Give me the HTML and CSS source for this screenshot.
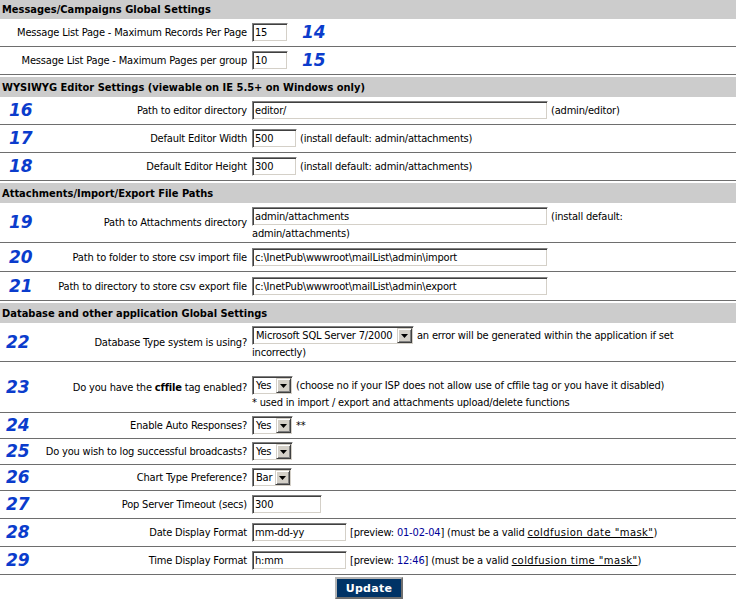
FILE: index.html
```html
<!DOCTYPE html>
<html>
<head>
<meta charset="utf-8">
<title>Global Settings</title>
<link rel="stylesheet" href="styles.css">
</head>
<body>
<form class="settings">

<table class="grid">
  <colgroup><col class="c-num"><col class="c-label"><col></colgroup>
  <tr class="head head--first"><td colspan="3">Messages/Campaigns Global Settings</td></tr>
  <tr class="r-in">
    <td colspan="2" class="label">Message List Page - Maximum Records Per Page</td>
    <td class="field"><input class="txt w36" value="15"><span class="num num--after">14</span></td>
  </tr>
  <tr class="r-in">
    <td colspan="2" class="label">Message List Page - Maximum Pages per group</td>
    <td class="field"><input class="txt w36" value="10"><span class="num num--after">15</span></td>
  </tr>
</table>

<table class="grid">
  <colgroup><col class="c-num"><col class="c-label"><col></colgroup>
  <tr class="head"><td colspan="3">WYSIWYG Editor Settings (viewable on IE 5.5+ on Windows only)</td></tr>
  <tr class="r-in">
    <td class="numcell"><span class="num">16</span></td>
    <td class="label">Path to editor directory</td>
    <td class="field"><input class="txt w296" value="editor/"> (admin/editor)</td>
  </tr>
  <tr class="r-in">
    <td class="numcell"><span class="num">17</span></td>
    <td class="label">Default Editor Width</td>
    <td class="field"><input class="txt w45" value="500"> (install default: admin/attachments)</td>
  </tr>
  <tr class="r-in">
    <td class="numcell"><span class="num">18</span></td>
    <td class="label">Default Editor Height</td>
    <td class="field"><input class="txt w45" value="300"> (install default: admin/attachments)</td>
  </tr>
</table>

<table class="grid grid--paths">
  <colgroup><col class="c-num"><col class="c-label"><col></colgroup>
  <tr class="head"><td colspan="3">Attachments/Import/Export File Paths</td></tr>
  <tr class="r-two">
    <td class="numcell"><span class="num">19</span></td>
    <td class="label">Path to Attachments directory</td>
    <td class="field field--wrap"><input class="txt w296" value="admin/attachments"> (install default:<br>admin/attachments)</td>
  </tr>
  <tr class="r-tall">
    <td class="numcell"><span class="num">20</span></td>
    <td class="label">Path to folder to store csv import file</td>
    <td class="field"><input class="txt w296" value="c:\InetPub\wwwroot\mailList\admin\import"></td>
  </tr>
  <tr class="r-tall">
    <td class="numcell"><span class="num">21</span></td>
    <td class="label">Path to directory to store csv export file</td>
    <td class="field"><input class="txt w296" value="c:\InetPub\wwwroot\mailList\admin\export"></td>
  </tr>
</table>

<table class="grid grid--app">
  <colgroup><col class="c-num"><col class="c-label"><col></colgroup>
  <tr class="head"><td colspan="3">Database and other application Global Settings</td></tr>
  <tr class="r-two r-two--short">
    <td class="numcell"><span class="num">22</span></td>
    <td class="label">Database Type system is using?</td>
    <td class="field field--wrap"><span class="select sel-db"><span class="select__value">Microsoft SQL Server 7/2000</span><span class="select__btn"><svg width="7" height="4" viewBox="0 0 7 4"><path d="M0 0h7L3.5 4z" fill="#000"/></svg></span></span> an error will be generated within the application if set<br>incorrectly)</td>
  </tr>
  <tr class="r-three">
    <td class="numcell"><span class="num">23</span></td>
    <td class="label">Do you have the <b>cffile</b> tag enabled?</td>
    <td class="field field--low"><span class="select sel-yn"><span class="select__value">Yes</span><span class="select__btn"><svg width="7" height="4" viewBox="0 0 7 4"><path d="M0 0h7L3.5 4z" fill="#000"/></svg></span></span> (choose no if your ISP does not allow use of cffile tag or you have it disabled)<br>* used in import / export and attachments upload/delete functions</td>
  </tr>
  <tr class="r-sel">
    <td class="numcell"><span class="num">24</span></td>
    <td class="label">Enable Auto Responses?</td>
    <td class="field"><span class="select sel-yn"><span class="select__value">Yes</span><span class="select__btn"><svg width="7" height="4" viewBox="0 0 7 4"><path d="M0 0h7L3.5 4z" fill="#000"/></svg></span></span> **</td>
  </tr>
  <tr class="r-sel">
    <td class="numcell"><span class="num">25</span></td>
    <td class="label">Do you wish to log successful broadcasts?</td>
    <td class="field"><span class="select sel-yn"><span class="select__value">Yes</span><span class="select__btn"><svg width="7" height="4" viewBox="0 0 7 4"><path d="M0 0h7L3.5 4z" fill="#000"/></svg></span></span></td>
  </tr>
  <tr class="r-sel">
    <td class="numcell"><span class="num">26</span></td>
    <td class="label">Chart Type Preference?</td>
    <td class="field"><span class="select sel-bar"><span class="select__value">Bar</span><span class="select__btn"><svg width="7" height="4" viewBox="0 0 7 4"><path d="M0 0h7L3.5 4z" fill="#000"/></svg></span></span></td>
  </tr>
  <tr class="r-in">
    <td class="numcell"><span class="num">27</span></td>
    <td class="label">Pop Server Timeout (secs)</td>
    <td class="field"><input class="txt w70" value="300"></td>
  </tr>
  <tr class="r-in">
    <td class="numcell"><span class="num">28</span></td>
    <td class="label">Date Display Format</td>
    <td class="field"><input class="txt w95" value="mm-dd-yy"> [preview: <span class="preview">01-02-04</span>] (must be a valid <a class="mask" href="#">coldfusion date "mask"</a>)</td>
  </tr>
  <tr class="r-in">
    <td class="numcell"><span class="num">29</span></td>
    <td class="label">Time Display Format</td>
    <td class="field"><input class="txt w95" value="h:mm"> [preview: <span class="preview">12:46</span>] (must be a valid <a class="mask" href="#">coldfusion time "mask"</a>)</td>
  </tr>
</table>

<div class="actions"><button type="button" class="btn">Update</button></div>
</form>
</body>
</html>
```

FILE: styles.css
```css
html, body {
  margin: 0;
  padding: 0;
  background: #fff;
}

body {
  font: 11px/15px "DejaVu Sans Condensed", "DejaVu Sans", sans-serif;
  letter-spacing: -0.18px;
  color: #000;
}

.grid {
  width: 736px;
  border-collapse: separate;
  border-spacing: 0;
  table-layout: fixed;
}

.c-num { width: 60px; }
.c-label { width: 190px; }

.grid--paths .c-num { width: 48px; }
.grid--paths .c-label { width: 202px; }

.grid--app .c-num { width: 40px; }
.grid--app .c-label { width: 210px; }

.grid td {
  padding: 0;
  border-bottom: 1px solid #6e6e6e;
  vertical-align: middle;
}

.head td {
  background: #cccccc;
  font-weight: bold;
  letter-spacing: 0;
  height: 20px;
  padding-left: 2px;
  border-bottom: 0;
  border-top: 2px solid #fff;
  white-space: nowrap;
}

.head--first td {
  height: 19px;
  border-top: 0;
}

.r-in td { height: 27px; }
.r-tall td { height: 28px; }
.r-sel td { height: 25px; }
.r-two td { height: 39px; }
.r-two--short td { height: 38px; }
.r-three td { height: 50px; }

.label {
  text-align: right;
  padding-right: 3px !important;
  white-space: nowrap;
}

.field {
  padding-left: 2px !important;
}

.r-two .field--wrap {
  vertical-align: bottom;
  padding-bottom: 1px !important;
  height: 38px;
}

.r-two--short .field--wrap {
  height: 37px;
}

.r-three .field--low {
  vertical-align: bottom;
  padding-bottom: 2px !important;
  height: 48px;
}

.numcell {
  padding-left: 9px !important;
}

.grid--app .numcell {
  padding-left: 6px !important;
}

.num {
  font: italic bold 17px/17px "DejaVu Sans", sans-serif;
  letter-spacing: 0;
  color: #0b3ccc;
  vertical-align: middle;
}

.num--after {
  margin-left: 14px;
}

.txt {
  box-sizing: border-box;
  height: 19px;
  margin: 0;
  padding: 0 2px;
  font: 11px "DejaVu Sans Condensed", "DejaVu Sans", sans-serif;
  letter-spacing: -0.18px;
  color: #000;
  background: #fff;
  border: 1px solid;
  border-color: #808080 #fff #fff #808080;
  box-shadow: inset 1px 1px 0 #404040, inset -1px -1px 0 #d4d0c8;
  vertical-align: middle;
  outline: none;
}

.w36 { width: 36px; }
.w45 { width: 45px; }
.w70 { width: 70px; }
.w95 { width: 95px; }
.w296 { width: 296px; }

.select {
  display: inline-flex;
  align-items: center;
  box-sizing: border-box;
  height: 19px;
  padding: 1px;
  border: 1px solid;
  border-color: #808080 #fff #fff #808080;
  box-shadow: inset 1px 1px 0 #404040, inset -1px -1px 0 #d4d0c8;
  background: #fff;
  vertical-align: middle;
  line-height: 15px;
}

.sel-db { width: 162px; }
.sel-yn { width: 41px; }
.sel-bar { width: 40px; }

.select__value {
  flex: 1;
  padding-left: 2px;
  white-space: nowrap;
  overflow: hidden;
}

.select__btn {
  flex: none;
  width: 15px;
  height: 15px;
  box-sizing: border-box;
  display: flex;
  align-items: center;
  justify-content: center;
  background: #d4d0c8;
  border: 1px solid;
  border-color: #d4d0c8 #404040 #404040 #d4d0c8;
  box-shadow: inset 1px 1px 0 #fff, inset -1px -1px 0 #808080;
}

.preview {
  color: #000099;
}

.mask {
  font: 10px "DejaVu Sans", sans-serif;
  letter-spacing: 0.45px;
  color: #000;
  text-decoration: underline;
}

.actions {
  text-align: center;
  padding-top: 2px;
}

.btn {
  box-sizing: border-box;
  width: 68px;
  height: 22px;
  padding: 0;
  font: bold 11px "DejaVu Sans", sans-serif;
  letter-spacing: 0.3px;
  color: #fff;
  background: #003366;
  border: 2px solid;
  border-color: #b4b4b4 #6e6e6e #6e6e6e #b4b4b4;
  cursor: pointer;
}
```
